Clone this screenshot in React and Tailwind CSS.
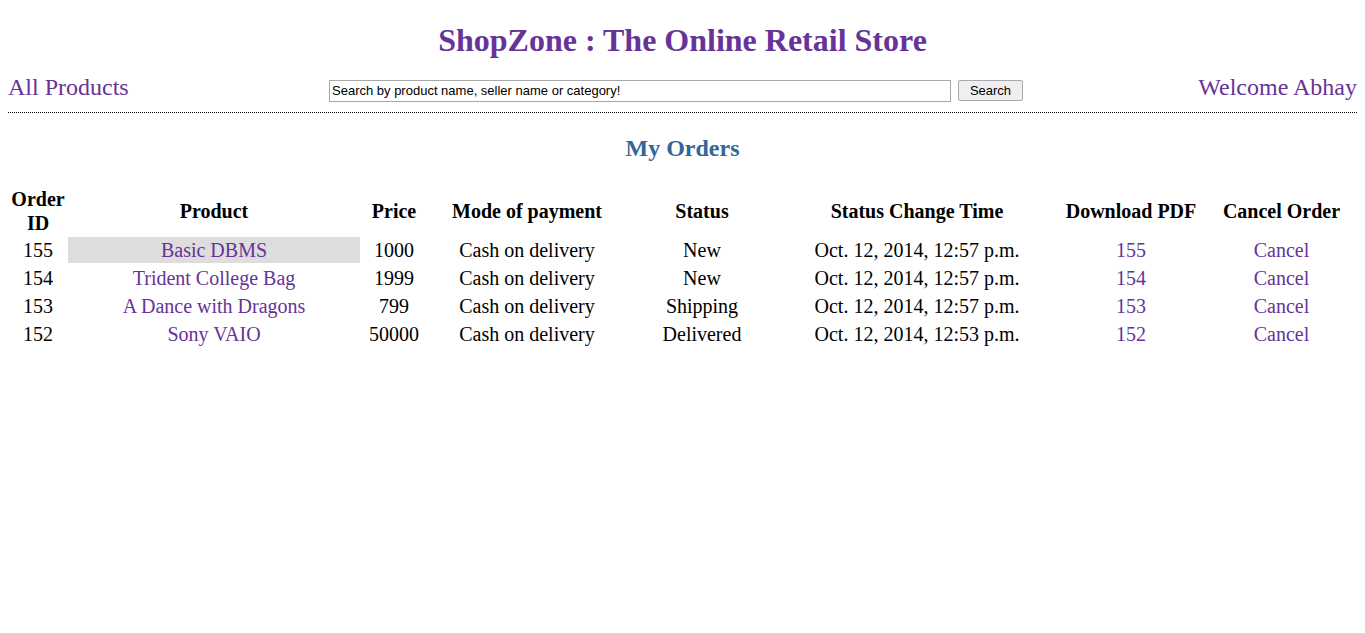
import { useState } from 'react'

const orders = [
  { id: 155, product: 'Basic DBMS', price: 1000, mode: 'Cash on delivery', status: 'New', time: 'Oct. 12, 2014, 12:57 p.m.' },
  { id: 154, product: 'Trident College Bag', price: 1999, mode: 'Cash on delivery', status: 'New', time: 'Oct. 12, 2014, 12:57 p.m.' },
  { id: 153, product: 'A Dance with Dragons', price: 799, mode: 'Cash on delivery', status: 'Shipping', time: 'Oct. 12, 2014, 12:57 p.m.' },
  { id: 152, product: 'Sony VAIO', price: 50000, mode: 'Cash on delivery', status: 'Delivered', time: 'Oct. 12, 2014, 12:53 p.m.' }
]

export default function App() {
  const [query, setQuery] = useState('Search by product name, seller name or category!')
  const [hovered, setHovered] = useState(155)

  return (
    <div className="min-h-[633px] bg-white px-[8px] font-['Liberation_Serif',serif] text-black">
      <h1 className="pt-[22px] text-center text-[32px] font-bold leading-[37px] text-[#663399]">
        ShopZone : The Online Retail Store
      </h1>

      <div className="mt-[15px] flex items-baseline border-b border-dotted border-black pb-[10px]">
        <a href="#" className="w-[321px] text-[24px] leading-[27px] text-[#663399]">All Products</a>
        <form className="flex items-baseline" onSubmit={(e) => e.preventDefault()}>
          <input
            value={query}
            onChange={(e) => setQuery(e.target.value)}
            className="h-[22px] w-[622px] border border-[#a9a9a9] px-[2px] font-['Liberation_Sans',Arial,sans-serif] text-[13px] text-black outline-none"
          />
          <button
            type="submit"
            className="ml-[7px] h-[21px] w-[65px] rounded-[2px] border border-[#a9a9a9] bg-[#efefef] font-['Liberation_Sans',Arial,sans-serif] text-[13px] text-black"
          >
            Search
          </button>
        </form>
        <div className="flex-1 text-right">
          <a href="#" className="text-[24px] leading-[27px] text-[#663399]">Welcome Abhay</a>
        </div>
      </div>

      <h2 className="mt-[22px] text-center text-[24px] font-bold leading-[27px] text-[#336699]">My Orders</h2>

      <table className="mt-[22px] w-full table-fixed border-separate border-spacing-x-0 border-spacing-y-[2px] text-[20px]">
        <colgroup>
          <col className="w-[60px]" />
          <col className="w-[292px]" />
          <col className="w-[68px]" />
          <col className="w-[198px]" />
          <col className="w-[152px]" />
          <col className="w-[278px]" />
          <col className="w-[150px]" />
          <col />
        </colgroup>
        <thead>
          <tr className="h-[49px] text-center font-bold leading-[24px]">
            <th>Order ID</th>
            <th>Product</th>
            <th>Price</th>
            <th>Mode of payment</th>
            <th>Status</th>
            <th>Status Change Time</th>
            <th>Download PDF</th>
            <th>Cancel Order</th>
          </tr>
        </thead>
        <tbody>
          {orders.map((o) => (
            <tr key={o.id} className="h-[26px] text-center leading-[24px]">
              <td>{o.id}</td>
              <td
                onMouseEnter={() => setHovered(o.id)}
                className={hovered === o.id ? 'bg-[#dddddd]' : ''}
              >
                <a href="#" className="text-[#663399]">{o.product}</a>
              </td>
              <td>{o.price}</td>
              <td>{o.mode}</td>
              <td>{o.status}</td>
              <td>{o.time}</td>
              <td><a href="#" className="text-[#663399]">{o.id}</a></td>
              <td><a href="#" className="text-[#663399]">Cancel</a></td>
            </tr>
          ))}
        </tbody>
      </table>
    </div>
  )
}
